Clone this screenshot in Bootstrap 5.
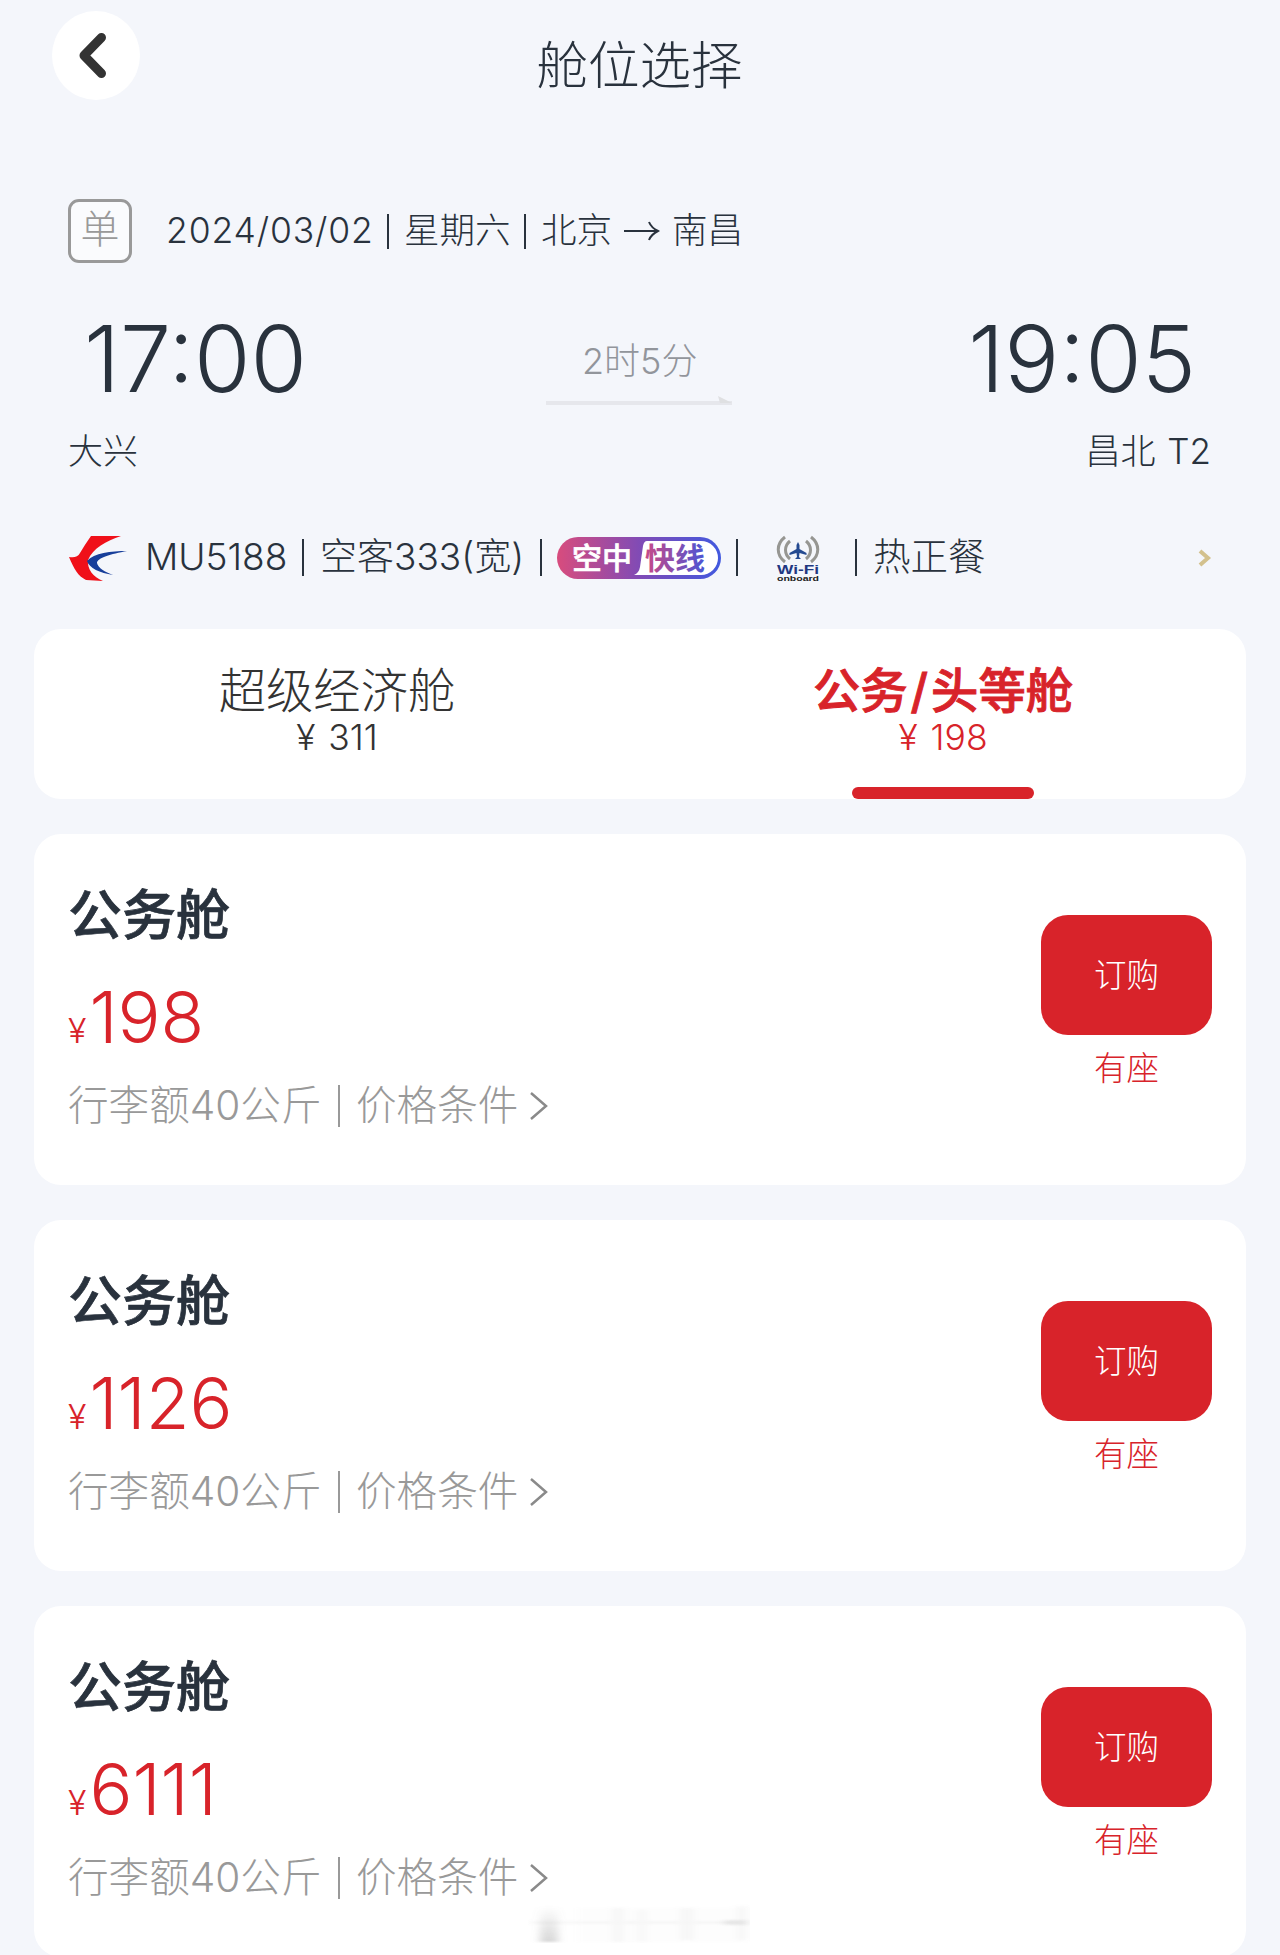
<!DOCTYPE html>
<html lang="zh-CN">
<head>
<meta charset="utf-8">
<meta name="viewport" content="width=device-width, initial-scale=1">
<title>舱位选择</title>
<link href="https://cdn.jsdelivr.net/npm/bootstrap@5.3.0/dist/css/bootstrap.min.css" rel="stylesheet">
<style>
:root { --ink:#29323d; --brand:#d8232a; --soft:#999; --page:#f4f6fb; }
body { background:var(--page); color:var(--ink); font-family:Inter,"Noto Sans CJK SC",sans-serif; font-weight:300; line-height:1; overflow-x:hidden; }
.screen { width:1280px; height:1955px; overflow:hidden; white-space:nowrap; }
.topbar { height:199px; padding:11px 52px 0; }
.back-btn { width:88px; height:89px; background:#fff; }
.page-title { font-size:51.5px; line-height:60px; padding-top:24px; font-weight:300; }
.side { width:89px; }
.trip { padding:0 68px; height:64px; }
.trip-tag { width:64px; height:64px; border:3px solid #999; border-radius:11px; background:#fafbfd; color:#999; font-size:39px; line-height:54px; margin-right:34px; }
.trip-line { font-size:35.5px; line-height:66px; }
.trip-date { width:221px; letter-spacing:.85px; }
.rule { width:2px; height:35px; background:currentColor; flex:none; }
.times { height:137px; padding:46px 69px 0; }
.clock { font-size:91.5px; line-height:100px; }
.clock.dep { margin-left:15px; }
.clock.arr { margin-right:15px; }
.span-time { width:187px; font-size:36px; color:#92959b; padding:27px 0 0 0; margin-left:4px; }
.span-time .dur { line-height:50px; }
.span-line { width:187px; height:9px; display:block; margin-top:10px; }
.airport { font-size:35px; line-height:44px; padding:0 69px 0 68px; margin-top:29px; word-spacing:2px; }
.flight { height:144px; padding:0 68px; font-size:37px; line-height:48px; margin-top:12px; }
.flight .rule { height:37px; }
.flight svg { overflow:visible; }
.flight .wing { margin-top:3px; margin-left:1px; margin-right:-1px; }
.flight-no { width:155px; padding-left:18px; margin-right:20px; }
.plane { width:236px; padding-left:16px; }
.panel { margin:0 34px; background:#fff; border-radius:27px; }
.cabin-tabs { height:170px; }
.cabin-tab { width:50%; padding-top:36px; position:relative; color:#333; }
.cabin-tab .name { font-size:47.3px; line-height:52px; }
.cabin-tab .fare { font-size:35.500px; line-height:42px; word-spacing:3px; }
.cabin-tab.active { color:var(--brand); }
.cabin-tab.active .name { font-weight:500; -webkit-text-stroke:.9px currentColor; }
.cabin-tab.active .name i { font-style:normal; padding:0 3px; }
.cabin-tab.active::after { content:""; position:absolute; bottom:0; left:50%; width:182px; height:12px; margin-left:-91px; border-radius:6px; background:var(--brand); }
.offer { height:351px; margin-top:35px; padding:0 34px; }
.offer-name { font-size:54px; line-height:64px; margin-top:50px; font-weight:500; -webkit-text-stroke:.7px currentColor; }
.offer-price { color:var(--brand); margin-top:32px; height:74px; }
.offer-price .yen { font-size:34px; margin-right:3px; }
.offer-price .sum { font-size:71.5px; line-height:74px; }
.offer-terms { color:var(--soft); font-size:40.6px; line-height:50px; margin-top:27px; }
.offer-terms .rule { height:42px; }
.offer-terms .bag { width:270px; }
.offer-terms .cond { width:190px; padding-left:16px; }
.buy { width:171px; height:120px; margin-top:81px; border:0; border-radius:27px; background:var(--brand); color:#fff; font-size:32.5px; line-height:122px; font-weight:300; }
.seat { color:var(--brand); font-size:32.5px; line-height:40px; margin-top:14px; }
.smudge { position:absolute; left:528px; top:1904px; width:222px; height:39px; }
</style>
<script src="https://cdn.jsdelivr.net/npm/bootstrap@5.3.0/dist/js/bootstrap.bundle.min.js"></script>
</head>
<body>
<main class="screen position-relative">
  <header class="topbar d-flex justify-content-between align-items-start">
    <button class="btn back-btn rounded-circle border-0 p-0" aria-label="返回">
      <svg width="88" height="89" viewBox="0 0 88 89" fill="none" stroke="#333" stroke-width="9" stroke-linecap="round" stroke-linejoin="round"><path d="M49.500 26.500 32 44.500l17.500 18"/></svg>
    </button>
    <h1 class="page-title m-0">舱位选择</h1>
    <div class="side"></div>
  </header>

  <section class="trip d-flex align-items-center">
    <div class="trip-tag text-center">单</div>
    <div class="trip-line d-flex align-items-center">
      <span class="trip-date">2024/03/02</span><span class="rule"></span>
      <span style="width:135px;padding-left:15px">星期六</span><span class="rule"></span>
      <span style="width:98px;padding-left:15px">北京</span>
      <svg width="36" height="24" viewBox="0 0 36 24" fill="none" stroke="#29323d" stroke-width="2"><path d="M0 12h34M25 3c2 5 5 7 9 9-4 2-7 4-9 9"/></svg>
      <span style="padding-left:12px">南昌</span>
    </div>
  </section>

  <section>
    <div class="times d-flex justify-content-between">
      <div class="clock dep">17:00</div>
      <div class="span-time text-center">
        <div class="dur">2时5分</div>
        <svg class="span-line" viewBox="0 0 187 9"><path d="M0 7h186" stroke="#e6e7ec" stroke-width="4"/><path d="M172 0l14 7h-12z" fill="#dfe0e2"/></svg>
      </div>
      <div class="clock arr">19:05</div>
    </div>
    <div class="airport d-flex justify-content-between"><span>大兴</span><span>昌北 T2</span></div>
  </section>

  <section class="flight d-flex align-items-center">
    <svg class="wing" width="59" height="46" viewBox="0 0 59 46"><path d="M22 0h30C37 5 24 12 19 24c-1 9 5 17 15 21l-17-1C9 40 5 33 0 21c5 1 9 0 11-4C14 12 17 7 22 0z" fill="#f01019"/><path d="M58 15C42 15 25 17 18 25c2 7 13 12 26 14-8-3-15-7-16-12 0-5 14-9 30-12z" fill="#173e9a"/></svg>
    <span class="flight-no">MU5188</span><span class="rule"></span>
    <span class="plane">空客333(宽)</span><span class="rule"></span>
    <svg style="margin-left:15px;margin-top:2px" width="164" height="42" viewBox="0 0 164 42">
      <defs><linearGradient id="pill" x1="0" x2="1"><stop offset="0" stop-color="#d84c7d"/><stop offset=".5" stop-color="#814bb5"/><stop offset="1" stop-color="#4159df"/></linearGradient>
      <linearGradient id="word" x1="0" x2="1"><stop offset="0" stop-color="#c84988"/><stop offset="1" stop-color="#4b55d5"/></linearGradient></defs>
      <rect width="164" height="42" rx="21" fill="url(#pill)"/>
      <path d="M90 4h54a17 17 0 0 1 0 34H77q5-2 6-8l3-21q1-5 4-5z" fill="#fff"/>
      <text x="15" y="32" font-size="30" font-weight="500" fill="#fff" stroke="#fff" stroke-width=".6" font-family="Noto Sans CJK SC">空中</text>
      <text x="88" y="32" font-size="30" font-weight="700" fill="url(#word)" font-family="Noto Sans CJK SC">快线</text>
    </svg>
    <span class="rule" style="margin-left:15px"></span>
    <svg style="margin-left:39px;margin-top:3px" width="42" height="46" viewBox="0 0 42 46">
      <g fill="none" stroke="#969692" stroke-width="3"><path d="M8 1C-1 8-1 19 8 26M13 5c-6 5-6 13 0 18M34 1c9 7 9 18 0 25M29 5c6 5 6 13 0 18"/></g>
      <path d="M21 6l1.500 3v4l7 4v2l-7-2-.5 4 2 2h-6l2-2-.5-4-7 2v-2l7-4V9z" fill="#244a91"/>
      <text x="0" y="38" font-size="13" font-weight="700" fill="#213781" font-family="Liberation Sans" textLength="42" lengthAdjust="spacingAndGlyphs">Wi-Fi</text>
      <text x="0" y="45" font-size="7" font-weight="700" fill="#222" font-family="Liberation Sans" textLength="42" lengthAdjust="spacingAndGlyphs">onboard</text>
    </svg>
    <span class="rule" style="margin-left:36px"></span>
    <span style="padding-left:16px;font-size:37.5px">热正餐</span>
    <svg class="ms-auto" width="13" height="18" viewBox="0 0 13 18" fill="none" stroke="#d3c18d" stroke-width="4"><path d="M1 3l8 7-8 7"/></svg>
  </section>

  <nav class="panel cabin-tabs d-flex text-center">
    <div class="cabin-tab"><div class="name">超级经济舱</div><div class="fare">¥ 311</div></div>
    <div class="cabin-tab active"><div class="name">公务<i>/</i>头等舱</div><div class="fare">¥ 198</div></div>
  </nav>

  <article class="panel offer d-flex justify-content-between">
    <div>
      <h2 class="offer-name mb-0">公务舱</h2>
      <div class="offer-price d-flex align-items-baseline"><span class="yen">¥</span><span class="sum">198</span></div>
      <div class="offer-terms d-flex align-items-center"><span class="bag">行李额40公斤</span><span class="rule"></span><span class="cond">价格条件</span><svg width="18" height="28" viewBox="0 0 18 28" fill="none" stroke="#8a8a8a" stroke-width="2.500"><path d="M1 1l15 13L1 27"/></svg></div>
    </div>
    <div class="text-center"><button class="btn buy d-block p-0">订购</button><div class="seat">有座</div></div>
  </article>
  <article class="panel offer d-flex justify-content-between">
    <div>
      <h2 class="offer-name mb-0">公务舱</h2>
      <div class="offer-price d-flex align-items-baseline"><span class="yen">¥</span><span class="sum">1126</span></div>
      <div class="offer-terms d-flex align-items-center"><span class="bag">行李额40公斤</span><span class="rule"></span><span class="cond">价格条件</span><svg width="18" height="28" viewBox="0 0 18 28" fill="none" stroke="#8a8a8a" stroke-width="2.500"><path d="M1 1l15 13L1 27"/></svg></div>
    </div>
    <div class="text-center"><button class="btn buy d-block p-0">订购</button><div class="seat">有座</div></div>
  </article>
  <article class="panel offer d-flex justify-content-between">
    <div>
      <h2 class="offer-name mb-0">公务舱</h2>
      <div class="offer-price d-flex align-items-baseline"><span class="yen">¥</span><span class="sum">6111</span></div>
      <div class="offer-terms d-flex align-items-center"><span class="bag">行李额40公斤</span><span class="rule"></span><span class="cond">价格条件</span><svg width="18" height="28" viewBox="0 0 18 28" fill="none" stroke="#8a8a8a" stroke-width="2.500"><path d="M1 1l15 13L1 27"/></svg></div>
    </div>
    <div class="text-center"><button class="btn buy d-block p-0">订购</button><div class="seat">有座</div></div>
  </article>

  <svg class="smudge" viewBox="0 0 222 39">
    <defs><linearGradient id="fade" x1="0" y1="0" x2="0" y2="1"><stop offset="0" stop-color="#888" stop-opacity="0"/><stop offset="1" stop-color="#888" stop-opacity=".34"/></linearGradient>
    <filter id="soft" x="-20%" width="140%"><feGaussianBlur stdDeviation="4 1"/></filter></defs>
    <g filter="url(#soft)"><path d="M12 2h18v36H12z" fill="url(#fade)"/><path d="M50 4h168v34H50z" fill="#888" opacity=".02"/><path d="M2 17h216v3H2zM84 4h12v34H84zM110 6h8v32h-8zM152 4h14v32h-14zM209 2h10v34h-10z" fill="#888" opacity=".06"/><path d="M196 16h24v5h-24z" fill="#888" opacity=".15"/></g>
  </svg>
</main>
</body>
</html>
